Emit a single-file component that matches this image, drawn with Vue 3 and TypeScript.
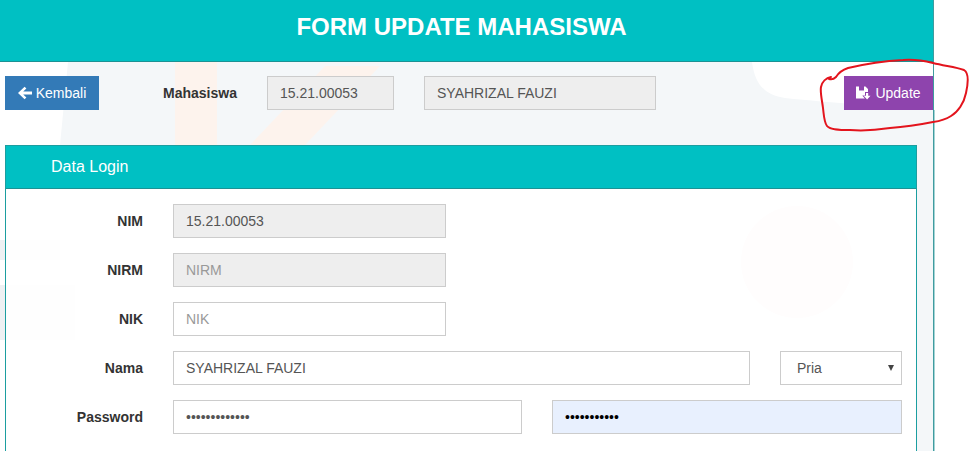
<template>
  <div class="page">
    <!-- faded background picture behind the form -->
    <svg class="watermark" width="936" height="451" viewBox="0 0 936 451">
      <path d="M68 62H752C755 85 765 95 785 98C830 103 890 106 933 110V145H60Z" fill="#f4f7f9" />
      <rect x="175" y="62" width="42" height="83" fill="#fdf3ed" />
      <path d="M250 145L325 66H380L305 145Z" fill="#fdf3ed" />
      <rect x="917" y="145" width="16" height="306" fill="#f4f7f9" />
      <rect x="934" y="110" width="1" height="341" fill="#a5d3d5" />
      <circle cx="797" cy="262" r="56" fill="#f8e4e4" />
      <rect x="0" y="240" width="60" height="20" fill="#eef1f3" />
      <rect x="0" y="285" width="75" height="55" fill="#eef1f3" />
    </svg>

    <header class="page-head">
      <h2>FORM UPDATE MAHASISWA</h2>
    </header>

    <div class="toolbar">
      <button class="btn btn-back">
        <svg class="ico" width="14" height="14" viewBox="0 0 14 14">
          <path d="M0 7L6.6 0.8L8.4 2.6L5.2 5.4H14V8.6H5.2L8.4 11.4L6.6 13.2Z" fill="#fff" />
        </svg>
        Kembali
      </button>
      <label class="mhs-label">Mahasiswa</label>
      <input class="field mhs-nim" readonly value="15.21.00053" />
      <input class="field mhs-name" readonly value="SYAHRIZAL FAUZI" />
      <button class="btn btn-update">
        <svg class="ico" width="15" height="14" viewBox="0 0 15 14">
          <path d="M0 0.5H3V4.5H8V0.5H9.5L12 3V6H9V9.5H6.3L8.8 12.5H0Z" fill="#fff" />
          <path d="M10 7H12.2V9.8H14.5L11.1 13.5L7.7 9.8H10Z" fill="#fff" />
        </svg>
        Update
      </button>
    </div>

    <section class="panel">
      <div class="panel-head">Data Login</div>
      <div class="panel-body">
        <div class="row">
          <label>NIM</label>
          <input class="field short" readonly value="15.21.00053" />
        </div>
        <div class="row">
          <label>NIRM</label>
          <input class="field short" readonly placeholder="NIRM" />
        </div>
        <div class="row">
          <label>NIK</label>
          <input class="field short plain" placeholder="NIK" />
        </div>
        <div class="row">
          <label>Nama</label>
          <input class="field grow plain" value="SYAHRIZAL FAUZI" />
          <div class="select-wrap">
            <select class="field plain select">
              <option>Pria</option>
              <option>Wanita</option>
            </select>
            <span class="caret"></span>
          </div>
        </div>
        <div class="row">
          <label>Password</label>
          <input class="field pw plain" type="password" value="1234567890123" />
          <input class="field grow autofill" type="password" value="12345678901" />
        </div>
      </div>
    </section>

    <!-- red marker drawn by hand round the Update button -->
    <svg class="marker" width="969" height="451" viewBox="0 0 969 451">
      <path
        d="M829 79C832 80 834 79 836 77C839 72 842 70 848 68C865 64 885 61 903 60C915 59 925 61 933 63C945 66 956 67 964 70C969 73 968 84 966 93C964 103 958 112 951 116C945 120 940 121 933 122C918 125 904 127 890 128C877 130 862 131 850 130C840 130 830 130 827 126C824 122 824 116 823 108C822 100 820 92 821 87C822 82 826 78 831 77"
        fill="none"
        stroke="#e3141d"
        stroke-width="2"
        stroke-linecap="round"
      />
    </svg>
  </div>
</template>

<script setup lang="ts">
</script>

<style>
html, body { overflow: hidden; background: #fff; }
</style>

<style scoped>
.page {
  position: relative;
  width: 933px;
  height: 451px;
  border-right: 1px solid #3f9c9f;
  font-family: "Liberation Sans", Arial, sans-serif;
  font-size: 14px;
  color: #333;
}
.watermark { position: absolute; left: 0; top: 0; }
.marker { position: absolute; left: 0; top: 0; pointer-events: none; }

.page-head {
  position: relative;
  height: 61px;
  background: #00c0c3;
  border-bottom: 1px solid #1c9294;
  display: flex;
  align-items: center;
  justify-content: center;
  padding-right: 10px;
}
.page-head h2 { margin: 0 0 7px; font-size: 24px; font-weight: 700; color: #fff; }

.toolbar {
  position: relative;
  display: flex;
  align-items: center;
  padding: 14px 0 0 5px;
  height: 34px;
}
.btn {
  height: 34px;
  border: 0;
  color: #fff;
  font: inherit;
  padding: 0;
  display: inline-flex;
  align-items: center;
  justify-content: center;
  gap: 4px;
}
.ico { flex: none; }
.btn-back { width: 94px; background: #337ab7; }
.btn-update { width: 89px; margin-left: auto; background: #8e44ad; }
.mhs-label { margin-left: 64px; width: 74px; font-weight: 700; }
.mhs-nim { width: 127px; margin-left: 30px; }
.mhs-name { width: 232px; margin-left: 30px; }

.field {
  height: 34px;
  box-sizing: border-box;
  padding: 0 12px;
  border: 1px solid #ccc;
  background: #eee;
  color: #555;
  font: inherit;
  border-radius: 0;
  outline: none;
  min-width: 0;
}
.field::placeholder { color: #999; opacity: 1; }
.plain { background: #fff; }
.autofill { background: #e8f0fe; color: #000; }
.short { width: 273px; }
.grow { flex: 1; }
.pw { flex: 0 0 349px; }

.panel {
  position: relative;
  margin: 35px 0 0 5px;
  width: 912px;
  box-sizing: border-box;
  border: 1px solid #1c9ea0;
  border-bottom: 0;
}
.panel-head {
  height: 42px;
  line-height: 41px;
  padding-left: 45px;
  background: #00c0c3;
  border-bottom: 1px solid #1c9294;
  color: #fff;
  font-size: 16px;
}
.panel-body {
  background: rgba(255, 255, 255, 0.9);
  padding: 15px 14px 20px 0;
  display: flex;
  flex-direction: column;
  gap: 15px;
}
.row { display: flex; align-items: center; gap: 30px; }
.row label { width: 137px; text-align: right; font-weight: 700; flex: none; }

.select-wrap { position: relative; width: 122px; flex: none; }
.select {
  width: 100%;
  padding-left: 16px;
  appearance: none;
  display: block;
}
.caret {
  position: absolute;
  right: 8px;
  top: 14px;
  border-left: 3px solid transparent;
  border-right: 3px solid transparent;
  border-top: 6px solid #444;
}
</style>
